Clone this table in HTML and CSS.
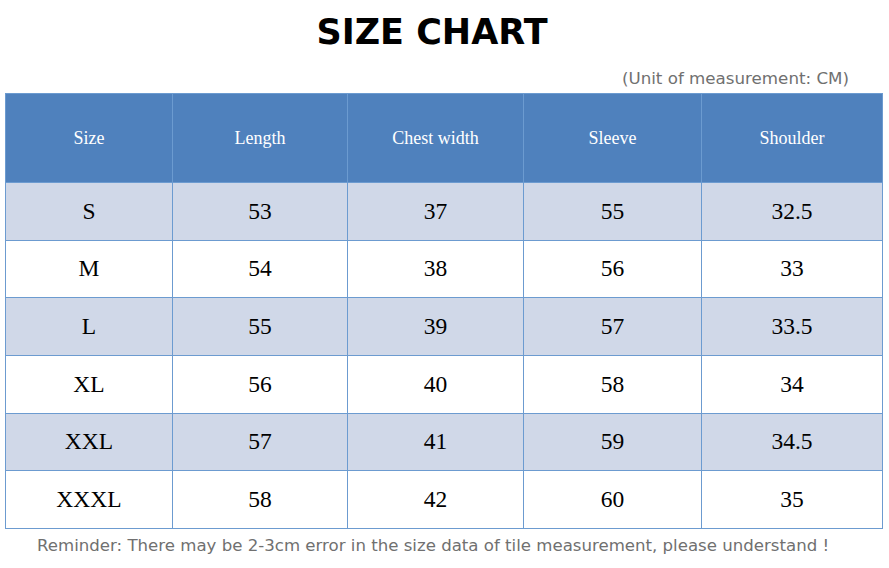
FILE: index.html
```html
<!DOCTYPE html>
<html>
<head>
<meta charset="utf-8">
<link rel="stylesheet" href="styles.css">
</head>
<body>
<div class="page">
  <h1 class="title">SIZE CHART</h1>
  <div class="unit">(Unit of measurement: CM)</div>
  <table class="chart">
    <colgroup>
      <col class="c1"><col class="c2"><col class="c3"><col class="c4"><col class="c5">
    </colgroup>
    <thead>
      <tr><th>Size</th><th>Length</th><th>Chest width</th><th>Sleeve</th><th>Shoulder</th></tr>
    </thead>
    <tbody>
      <tr class="alt"><td>S</td><td>53</td><td>37</td><td>55</td><td>32.5</td></tr>
      <tr><td>M</td><td>54</td><td>38</td><td>56</td><td>33</td></tr>
      <tr class="alt"><td>L</td><td>55</td><td>39</td><td>57</td><td>33.5</td></tr>
      <tr><td>XL</td><td>56</td><td>40</td><td>58</td><td>34</td></tr>
      <tr class="alt"><td>XXL</td><td>57</td><td>41</td><td>59</td><td>34.5</td></tr>
      <tr><td>XXXL</td><td>58</td><td>42</td><td>60</td><td>35</td></tr>
    </tbody>
  </table>
  <div class="reminder">Reminder: There may be 2-3cm error in the size data of tile measurement, please understand !</div>
</div>
</body>
</html>
```
FILE: styles.css
```css
html, body { margin: 0; padding: 0; background: #fff; }
.page { width: 889px; height: 568px; overflow: hidden; }
.title {
  margin: 0;
  padding-top: 12px;
  height: 40px;
  line-height: 40px;
  text-align: center;
  padding-right: 25px;
  font-family: "DejaVu Sans", sans-serif;
  font-weight: bold;
  font-size: 35px;
  color: #000;
}
.unit {
  margin-top: 14px;
  height: 24px;
  line-height: 24px;
  text-align: right;
  padding-right: 40px;
  font-family: "DejaVu Sans", sans-serif;
  font-size: 16.7px;
  color: #707070;
}
.chart {
  margin: 3px 0 0 5px;
  width: 877px;
  border-collapse: collapse;
  table-layout: fixed;
  font-family: "Liberation Serif", serif;
}
.c1 { width: 167px; } .c2 { width: 175px; } .c3 { width: 176px; } .c4 { width: 178px; } .c5 { width: 181px; }
.chart th, .chart td {
  border: 1px solid #6c9bd0;
  text-align: center;
  padding: 0;
}
.chart th {
  background: #4f81bd;
  color: #fff;
  font-weight: normal;
  font-size: 18px;
  height: 88px;
}
.chart td {
  height: 56.67px;
  font-size: 23.5px;
  color: #000;
}
.chart tr.alt td { background: #d0d8e8; }
.reminder {
  margin-top: 5px;
  padding-left: 37px;
  height: 24px;
  line-height: 24px;
  font-family: "DejaVu Sans", sans-serif;
  font-size: 16.6px;
  color: #707070;
  white-space: nowrap;
}
```
